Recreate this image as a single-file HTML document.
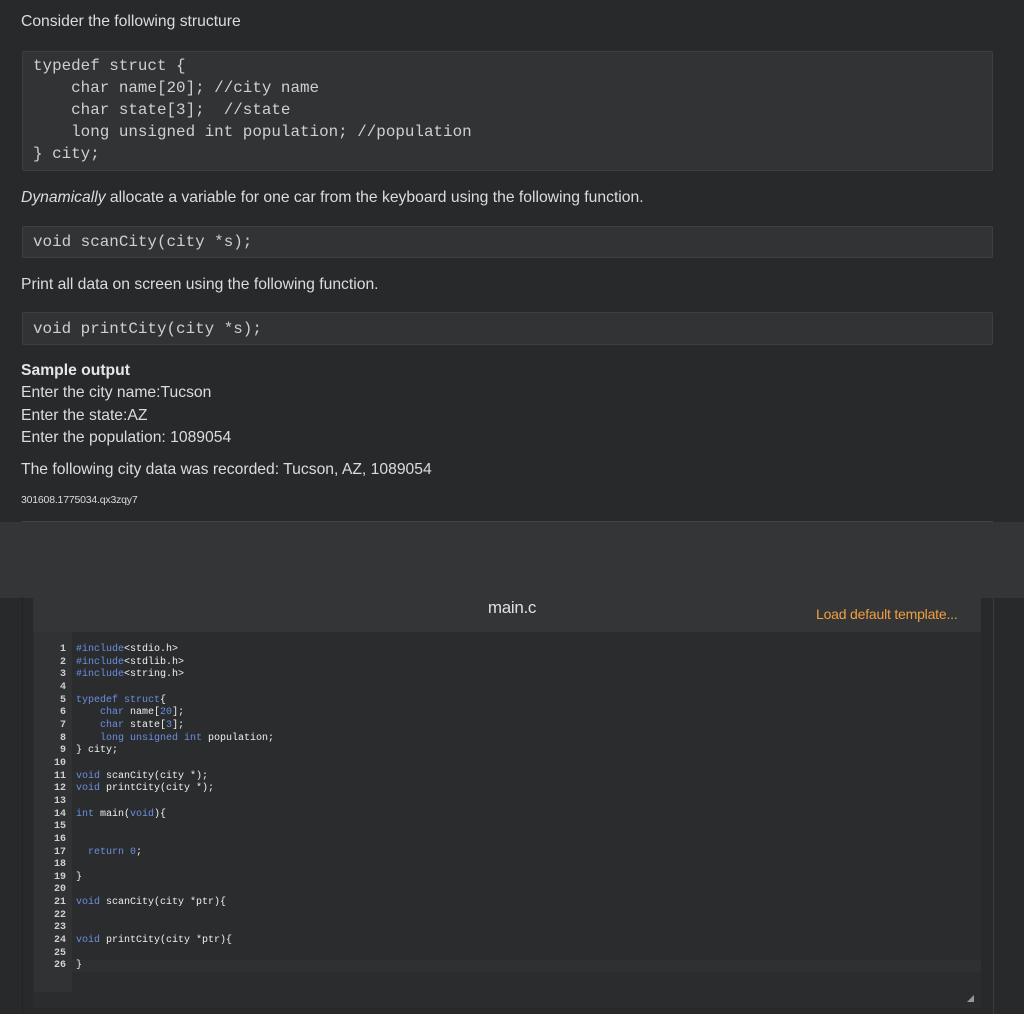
<!DOCTYPE html>
<html><head><meta charset="utf-8"><style>
*{margin:0;padding:0;box-sizing:border-box}
body{width:1024px;height:1014px;background:#28292b;position:relative;overflow:hidden;font-family:"Liberation Sans",sans-serif;color:#dcdcdc}
.t{position:absolute;left:21px;font-size:15.7px;white-space:nowrap}
.box{position:absolute;left:22px;width:971px;background:#323335;border:1px solid #3e3f41;border-radius:2px}
.mono{font-family:"Liberation Mono",monospace;font-size:15.9px;color:#cfcfcf;white-space:pre;position:absolute;left:10px;line-height:22px}
.band{position:absolute;left:0;top:522px;width:1024px;height:76px;background:#343537}
.hr{position:absolute;left:22px;top:521px;width:971px;height:1px;background:#444}
.panel{position:absolute;left:33px;top:597px;width:948px;height:411px;background:#2b2c2e}
.hdr{position:absolute;left:0;top:0;width:948px;height:35px;background:#343537}
.edge{position:absolute;top:597px;width:1px;height:417px;background:#222}
.gut{position:absolute;left:1px;top:35px;width:38px;height:360px;background:#313234}
.code{position:absolute;top:644px;font-family:"Liberation Mono",monospace;font-size:10px;line-height:12.65px;white-space:pre}
.ln{left:34px;width:32px;text-align:right;color:#d0d0d0;font-weight:bold}
.src{left:76px;color:#f0f0f0}
.k{color:#6a8fe0}
.cur{position:absolute;left:72px;top:960px;width:909px;height:12px;background:#2f3032}
</style></head><body>
<div class="t" style="top:13px">Consider the following structure</div>
<div class="box" style="top:51px;height:120px"><div class="mono" style="top:3px">typedef struct {
    char name[20]; //city name
    char state[3];  //state
    long unsigned int population; //population
} city;</div></div>
<div class="t" style="top:189px"><i>Dynamically</i> allocate a variable for one car from the keyboard using the following function.</div>
<div class="box" style="top:226px;height:32px"><div class="mono" style="top:4px">void scanCity(city *s);</div></div>
<div class="t" style="top:276px">Print all data on screen using the following function.</div>
<div class="box" style="top:312px;height:33px"><div class="mono" style="top:5px">void printCity(city *s);</div></div>
<div class="t" style="top:362px;font-weight:bold;color:#e6e6e6">Sample output</div>
<div class="t" style="top:384px">Enter the city name:Tucson</div>
<div class="t" style="top:407px">Enter the state:AZ</div>
<div class="t" style="top:429px">Enter the population: 1089054</div>
<div class="t" style="top:461px">The following city data was recorded: Tucson, AZ, 1089054</div>
<div class="t" style="top:494px;font-size:10.5px;letter-spacing:-0.2px">301608.1775034.qx3zqy7</div>
<div class="band"></div>
<div class="hr"></div>
<div class="edge" style="left:22px"></div>
<div class="edge" style="left:993px;background:#3a3b3d"></div>
<div class="panel"><div class="hdr"></div><div class="gut"></div></div>
<div style="position:absolute;left:0;width:1024px;top:598px;text-align:center;font-size:17px;color:#e0e0e0;letter-spacing:-0.3px">main.c</div>
<div style="position:absolute;left:816px;top:606px;font-size:14px;color:#f0a040;letter-spacing:-0.2px">Load default template...</div>
<div class="cur"></div>
<div class="code ln">1
2
3
4
5
6
7
8
9
10
11
12
13
14
15
16
17
18
19
20
21
22
23
24
25
26</div>
<div class="code src"><span class="k">#include</span>&lt;stdio.h&gt;
<span class="k">#include</span>&lt;stdlib.h&gt;
<span class="k">#include</span>&lt;string.h&gt;

<span class="k">typedef struct</span>{
    <span class="k">char</span> name[<span class="k">20</span>];
    <span class="k">char</span> state[<span class="k">3</span>];
    <span class="k">long unsigned int</span> population;
} city;

<span class="k">void</span> scanCity(city *);
<span class="k">void</span> printCity(city *);

<span class="k">int</span> main(<span class="k">void</span>){


  <span class="k">return 0</span>;

}

<span class="k">void</span> scanCity(city *ptr){


<span class="k">void</span> printCity(city *ptr){

}</div>
<div style="position:absolute;left:967px;top:995px;width:0;height:0;border-left:7px solid transparent;border-bottom:7px solid #999"></div>
</body></html>
